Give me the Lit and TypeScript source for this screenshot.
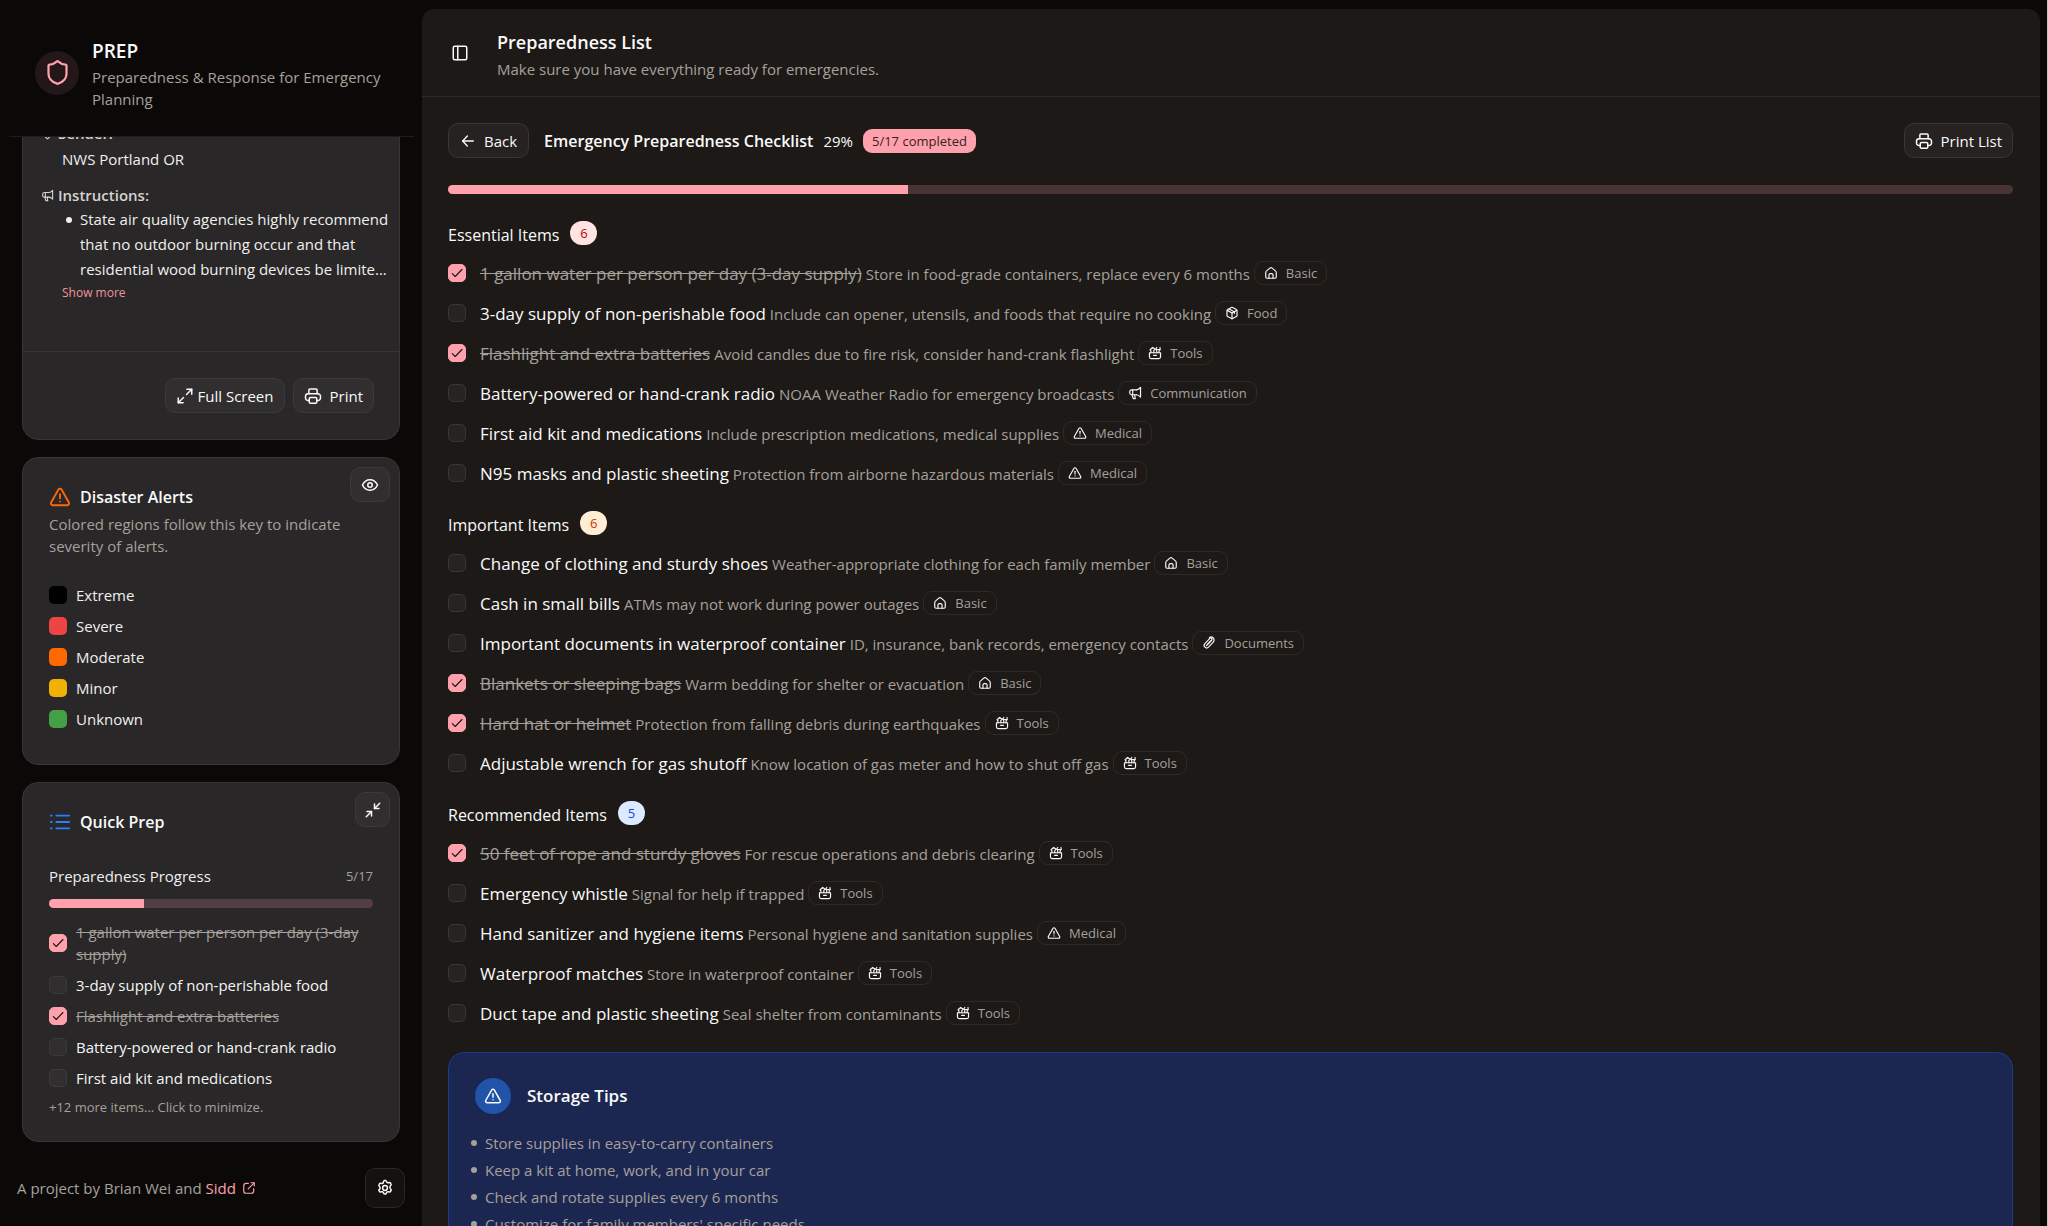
import { LitElement, html, css, svg, nothing } from "lit";
import { customElement, property } from "lit/decorators.js";
import { classMap } from "lit/directives/class-map.js";
import { styleMap } from "lit/directives/style-map.js";

const ICONS: Record<string, unknown> = {
  shield: svg`<path d="M20 13c0 5-3.5 7.5-7.66 8.95a1 1 0 0 1-.67-.01C7.5 20.5 4 18 4 13V6a1 1 0 0 1 1-1c2 0 4.5-1.2 6.24-2.72a1.17 1.17 0 0 1 1.52 0C14.51 3.81 17 5 19 5a1 1 0 0 1 1 1z"/>`,
  sidebar: svg`<rect x="3" y="3" width="18" height="18" rx="2"/><path d="M9 3v18"/>`,
  back: svg`<path d="M20 12H4"/><path d="M11 4.500 4 12l7 7.500"/>`,
  printer: svg`<path d="M7 18H5.500A3.500 3.500 0 0 1 2 14.500v-2A3.500 3.500 0 0 1 5.500 9h13a3.500 3.500 0 0 1 3.500 3.500v2a3.500 3.500 0 0 1-3.500 3.500H17"/><path d="M6.500 9V4a1.500 1.500 0 0 1 1.500-1.500h8A1.500 1.500 0 0 1 17.500 4v5"/><rect x="7" y="14" width="10" height="7.500" rx="1.500"/>`,
  expand: svg`<path d="M14.500 3H21v6.500"/><path d="M21 3l-7 7"/><path d="M9.500 21H3v-6.500"/><path d="M3 21l7-7"/>`,
  collapse: svg`<path d="M14 4v6h6"/><path d="M14 10l7-7"/><path d="M4 14h6v6"/><path d="M10 14l-7 7"/>`,
  eye: svg`<path d="M2 12c2-4.300 5.600-7 10-7s8 2.700 10 7c-2 4.300-5.600 7-10 7s-8-2.700-10-7z"/><circle cx="12" cy="12" r="3"/>`,
  alert: svg`<path d="M10.300 3.900 2.300 18a2 2 0 0 0 1.700 3h16a2 2 0 0 0 1.700-3l-8-14.100a2 2 0 0 0-3.400 0z"/><path d="M12 9v4.500"/><path d="M12 17h.01"/>`,
  list: svg`<path d="M8 5h14"/><path d="M8 12h14"/><path d="M8 19h14"/><path d="M2 5h1"/><path d="M2 12h1"/><path d="M2 19h1"/>`,
  external: svg`<path d="M11 4H7a4 4 0 0 0-4 4v9a4 4 0 0 0 4 4h9a4 4 0 0 0 4-4v-4"/><path d="M15.500 3H21v5.500"/><path d="M20.500 3.500 10.500 13.500"/>`,
  settings: svg`<path d="M9.700 4.100 10.400 2.600a1 1 0 0 1 .9-.6h1.400a1 1 0 0 1 .9.600l.7 1.500c.3.700 1.100 1.100 1.900 1l2-.3a1 1 0 0 1 1 .5l.9 1.500a1 1 0 0 1 0 1.100l-1.100 1.500c-.6.900-.6 2.300 0 3.200l1.100 1.500a1 1 0 0 1 0 1.100l-.9 1.500a1 1 0 0 1-1 .5l-2-.3c-.8-.1-1.600.3-1.900 1l-.7 1.500a1 1 0 0 1-.9.600h-1.400a1 1 0 0 1-.9-.6l-.7-1.500c-.3-.7-1.100-1.100-1.900-1l-2 .3a1 1 0 0 1-1-.5l-.9-1.500a1 1 0 0 1 0-1.100L5 13.600c.6-.9.6-2.300 0-3.200L3.900 8.900a1 1 0 0 1 0-1.100l.9-1.500a1 1 0 0 1 1-.5l2 .3c.8.1 1.600-.3 1.900-1z"/><circle cx="12" cy="12" r="3.200"/>`,
  check: svg`<path d="M4 13l5 5L20.500 6"/>`,
  pin: svg`<path d="M12 22c-4-3.200-8-7.500-8-12a8 8 0 0 1 16 0c0 4.500-4 8.800-8 12z"/><circle cx="12" cy="10" r="3"/>`,
  basic: svg`<path d="M3 11.500a4 4 0 0 1 1.500-3.100L10 3.700a3.200 3.200 0 0 1 4 0l5.500 4.700a4 4 0 0 1 1.500 3.100V19a2 2 0 0 1-2 2H5a2 2 0 0 1-2-2z"/><path d="M8.500 21v-5.500a2.500 2.500 0 0 1 2.500-2.500h2a2.500 2.500 0 0 1 2.500 2.500V21"/>`,
  food: svg`<path d="M12 22 4.500 18A2 2 0 0 1 3.400 16.200V7.800A2 2 0 0 1 4.500 6L11 2.400a2 2 0 0 1 2 0L19.500 6a2 2 0 0 1 1.100 1.800v8.400a2 2 0 0 1-1.100 1.800z"/><path d="M12 12v10"/><path d="M4 7.500l8 4.500 8-4.500"/><path d="M7.500 5.500l8.500 4.500v3"/>`,
  tools: svg`<path d="M2.500 11.500h19v7a3 3 0 0 1-3 3h-13a3 3 0 0 1-3-3z"/><path d="M9.500 16h5"/><path d="M5 11.500V8L3.500 6.500 8 2.500l4.500 3-2.500 2v4"/><path d="M15 11.500V7.500L13.500 5 15 2.500M20.500 2.500 21 6l-2 2v3.500M15 6h4"/>`,
  communication: svg`<path d="M14.500 6.500H6.500A3.500 3.500 0 0 0 3 10v1.500A3.500 3.500 0 0 0 6.500 15h8"/><path d="M14.500 6.500C17 6.500 20 4.500 21.500 2.500v16.500C20 17 17 15 14.500 15"/><path d="M8 6.500V15"/><path d="M7 15.500l2 6h3.500l-1-6"/>`,
  documents: svg`<path d="M9.500 14.500l7-7.500a2 2 0 0 0-3-3l-8.500 9a4.300 4.300 0 0 0 6.200 6.200l8.500-9"/><path d="M7.800 16.300l8.500-9"/><path d="M20 9.500a6 6 0 0 0-1-6.500c-1.800-1.700-4.700-1.500-6.500.3"/>`,
};

@customElement("prep-icon")
export class PrepIcon extends LitElement {
  @property() name = "";
  @property({ type: Number }) weight = 2;

  static styles = css`
    :host { display: inline-flex; flex: none; width: 18px; height: 18px; }
    .glyph { width: 100%; height: 100%; fill: none; stroke: currentColor; stroke-linecap: round; stroke-linejoin: round; }
  `;

  render() {
    return html`<svg class="glyph" viewBox="0 0 24 24" stroke-width=${this.weight} aria-hidden="true">${ICONS[this.name]}</svg>`;
  }
}

const controls = css`
  :host { display: block; }
  * { box-sizing: border-box; }
  button { font: inherit; color: inherit; cursor: pointer; }
  h1, h2, h3, p, ul { margin: 0; padding: 0; }
  .btn {
    display: inline-flex; align-items: center; justify-content: center; gap: 8px;
    height: 35px; padding: 0 10px; border: 1px solid #3c393a; border-radius: 10px;
    background: #302e2f; color: #fafaf9; font-size: 15px; line-height: 22px;
  }
  .check { display: inline-grid; flex: none; width: 18px; height: 18px; }
  .check > * { grid-area: 1 / 1; }
  .box {
    appearance: none; margin: 0; width: 18px; height: 18px;
    border: 1px solid #3d3a3a; border-radius: 5px; background: #302e2f;
  }
  .box:checked { background: #ffa1ad; border-color: #ffa1ad; }
  .tick { width: 14px; height: 14px; place-self: center; color: #1c1917; pointer-events: none; }
  .bar { height: 9px; border-radius: 9px; overflow: hidden; background: rgb(255 161 173 / 0.2); }
  .fill { height: 100%; background: #ffa1ad; }
  .dots { list-style: none; }
  .dots li { display: flex; gap: 8px; }
  .dots li::before { content: ""; flex: none; width: 6px; height: 6px; margin-top: 10px; border-radius: 50%; background: currentColor; }
`;

interface Item {
  title: string;
  note: string;
  tag: string;
  done?: boolean;
}

interface Group {
  name: string;
  tone: string;
  items: Item[];
}

const GROUPS: Group[] = [
  {
    name: "Essential Items",
    tone: "red",
    items: [
      { title: "1 gallon water per person per day (3-day supply)", note: "Store in food-grade containers, replace every 6 months", tag: "Basic", done: true },
      { title: "3-day supply of non-perishable food", note: "Include can opener, utensils, and foods that require no cooking", tag: "Food" },
      { title: "Flashlight and extra batteries", note: "Avoid candles due to fire risk, consider hand-crank flashlight", tag: "Tools", done: true },
      { title: "Battery-powered or hand-crank radio", note: "NOAA Weather Radio for emergency broadcasts", tag: "Communication" },
      { title: "First aid kit and medications", note: "Include prescription medications, medical supplies", tag: "Medical" },
      { title: "N95 masks and plastic sheeting", note: "Protection from airborne hazardous materials", tag: "Medical" },
    ],
  },
  {
    name: "Important Items",
    tone: "orange",
    items: [
      { title: "Change of clothing and sturdy shoes", note: "Weather-appropriate clothing for each family member", tag: "Basic" },
      { title: "Cash in small bills", note: "ATMs may not work during power outages", tag: "Basic" },
      { title: "Important documents in waterproof container", note: "ID, insurance, bank records, emergency contacts", tag: "Documents" },
      { title: "Blankets or sleeping bags", note: "Warm bedding for shelter or evacuation", tag: "Basic", done: true },
      { title: "Hard hat or helmet", note: "Protection from falling debris during earthquakes", tag: "Tools", done: true },
      { title: "Adjustable wrench for gas shutoff", note: "Know location of gas meter and how to shut off gas", tag: "Tools" },
    ],
  },
  {
    name: "Recommended Items",
    tone: "blue",
    items: [
      { title: "50 feet of rope and sturdy gloves", note: "For rescue operations and debris clearing", tag: "Tools", done: true },
      { title: "Emergency whistle", note: "Signal for help if trapped", tag: "Tools" },
      { title: "Hand sanitizer and hygiene items", note: "Personal hygiene and sanitation supplies", tag: "Medical" },
      { title: "Waterproof matches", note: "Store in waterproof container", tag: "Tools" },
      { title: "Duct tape and plastic sheeting", note: "Seal shelter from contaminants", tag: "Tools" },
    ],
  },
];

const TAG_ICONS: Record<string, string> = {
  Basic: "basic",
  Food: "food",
  Tools: "tools",
  Communication: "communication",
  Medical: "alert",
  Documents: "documents",
};

const SEVERITIES = [
  { name: "Extreme", color: "#000000" },
  { name: "Severe", color: "#ef4444" },
  { name: "Moderate", color: "#ff6900" },
  { name: "Minor", color: "#f0b100" },
  { name: "Unknown", color: "#43a047" },
];

const TIPS = [
  "Store supplies in easy-to-carry containers",
  "Keep a kit at home, work, and in your car",
  "Check and rotate supplies every 6 months",
  "Customize for family members' specific needs",
];

const ALL = GROUPS.flatMap((g) => g.items);
const DONE = ALL.filter((i) => i.done).length;
const SHARE = (DONE / ALL.length) * 100;

function checkbox(id: string, checked: boolean) {
  return html`<span class="check">
    <input class="box" type="checkbox" id=${id} .checked=${checked} />
    ${checked ? html`<prep-icon class="tick" name="check"></prep-icon>` : nothing}
  </span>`;
}

function progress(label: string) {
  return html`<div class="bar" role="progressbar" aria-label=${label} aria-valuenow=${Math.round(SHARE)} aria-valuemin="0" aria-valuemax="100">
    <div class="fill" style=${styleMap({ width: `${SHARE}%` })}></div>
  </div>`;
}

@customElement("prep-sidebar")
export class PrepSidebar extends LitElement {
  static styles = [
    controls,
    css`
      :host { display: flex; flex-direction: column; min-height: 0; font-size: 15px; line-height: 22px; }
      .brand {
        display: flex; align-items: center; gap: 13px; flex: none; height: 128px;
        margin: 9px 8px 0 9px; padding: 0 26px; border-bottom: 1px solid #1f1d1c;
      }
      .emblem { display: grid; place-items: center; flex: none; width: 44px; height: 44px; border-radius: 50%; background: #231719; color: #ffa1ad; }
      .emblem prep-icon { width: 27px; height: 27px; }
      .words { padding-top: 2px; }
      .name { font-size: 19px; line-height: 29px; font-weight: 600; color: #fafaf9; }
      .sub { color: #a6a09b; }
      .feed { flex: 1; min-height: 0; overflow: hidden; display: flex; flex-direction: column; justify-content: flex-end; gap: 17px; padding: 0 22px 8px; }
      .card { position: relative; flex: none; border: 1px solid #373536; border-radius: 16px; background: #292728; color: #f0efee; }
      .report { padding: 0 8px 48px 18px; }
      .field { display: flex; align-items: center; gap: 4px; font-weight: 600; color: #d6d3d1; }
      .field prep-icon { width: 13px; height: 13px; }
      .value { padding: 4px 0 14px 21px; }
      .steps { padding: 1px 0 0 25px; line-height: 25px; }
      .more { display: block; margin-left: 21px; padding: 1px 0 0; border: 0; background: none; color: #f2949f; font-size: 12px; line-height: 20px; }
      .actions { display: flex; justify-content: flex-end; gap: 8px; padding: 26px 25px; border-top: 1px solid #373536; }
      .tight { gap: 4px; }
      .panel { padding: 25px 26px; }
      .legend { padding-bottom: 34px; }
      .head { display: flex; align-items: center; gap: 9px; height: 28px; font-size: 16px; font-weight: 600; color: #fafaf9; }
      .head prep-icon { width: 22px; height: 22px; }
      .orange { color: #ff6900; }
      .blue { color: #2b7fff; }
      .corner { position: absolute; top: 9px; right: 9px; }
      .wide { width: 40px; }
      .small { width: 35px; padding: 0; }
      .desc { color: #a6a09b; padding-top: 2px; }
      .rows { list-style: none; display: flex; flex-direction: column; gap: 9px; }
      .keys { padding-top: 27px; }
      .row { display: flex; align-items: center; gap: 9px; }
      .swatch { width: 18px; height: 18px; flex: none; border-radius: 5px; }
      .tally { display: flex; align-items: center; justify-content: space-between; margin-top: 29px; }
      .count, .rest { font-size: 13px; color: #a6a09b; }
      .bar { margin: 12px 0 13px; }
      .todo { font-weight: 500; color: #f5f5f4; }
      .done { color: #a6a09b; text-decoration: line-through; }
      .rest { padding-top: 9px; line-height: 18px; }
      .foot { flex: none; display: flex; align-items: center; justify-content: space-between; height: 76px; padding: 0 17px; color: #a6a09b; }
      .author { display: inline-flex; align-items: center; gap: 6px; color: #ffa1ad; text-decoration: none; }
      .author prep-icon { width: 14px; height: 14px; }
      .gear { width: 40px; height: 40px; padding: 0; background: #141211; border-color: #292625; }
    `,
  ];

  render() {
    return html`
      <header class="brand">
        <span class="emblem"><prep-icon name="shield"></prep-icon></span>
        <div class="words">
          <h1 class="name">PREP</h1>
          <p class="sub">Preparedness &amp; Response for Emergency Planning</p>
        </div>
      </header>
      <div class="feed">
        <section class="card">
          <div class="report">
            <div class="field"><prep-icon name="pin"></prep-icon>Sender:</div>
            <div class="value">NWS Portland OR</div>
            <div class="field"><prep-icon name="communication"></prep-icon>Instructions:</div>
            <ul class="steps dots">
              <li>State air quality agencies highly recommend that no outdoor burning occur and that residential wood burning devices be limite...</li>
            </ul>
            <button class="more">Show more</button>
          </div>
          <div class="actions">
            <button class="btn tight"><prep-icon name="expand"></prep-icon>Full Screen</button>
            <button class="btn"><prep-icon name="printer"></prep-icon>Print</button>
          </div>
        </section>

        <section class="card panel legend">
          <button class="btn corner wide" aria-label="Toggle alerts"><prep-icon name="eye"></prep-icon></button>
          <h2 class="head"><prep-icon class="orange" name="alert"></prep-icon>Disaster Alerts</h2>
          <p class="desc">Colored regions follow this key to indicate severity of alerts.</p>
          <ul class="rows keys">
            ${SEVERITIES.map((s) => html`<li class="row"><span class="swatch" style=${styleMap({ background: s.color })}></span>${s.name}</li>`)}
          </ul>
        </section>

        <section class="card panel">
          <button class="btn corner small" aria-label="Minimize"><prep-icon name="collapse"></prep-icon></button>
          <h2 class="head"><prep-icon class="blue" name="list"></prep-icon>Quick Prep</h2>
          <div class="tally"><span>Preparedness Progress</span><span class="count">${DONE}/${ALL.length}</span></div>
          ${progress("Preparedness progress")}
          <ul class="rows">
            ${ALL.slice(0, 5).map(
              (item, i) => html`<li class="row">
                ${checkbox(`quick-${i}`, !!item.done)}
                <label for=${`quick-${i}`} class=${classMap({ todo: !item.done, done: !!item.done })}>${item.title}</label>
              </li>`,
            )}
          </ul>
          <p class="rest">+${ALL.length - 5} more items... Click to minimize.</p>
        </section>
      </div>
      <footer class="foot">
        <span>A project by Brian Wei and <a class="author" href="#">Sidd <prep-icon name="external"></prep-icon></a></span>
        <button class="btn gear" aria-label="Settings"><prep-icon name="settings"></prep-icon></button>
      </footer>
    `;
  }
}

@customElement("prep-checklist")
export class PrepChecklist extends LitElement {
  static styles = [
    controls,
    css`
      :host { display: flex; flex-direction: column; min-height: 0; min-width: 0; overflow: hidden; border-radius: 12px 12px 0 0; background: #1c1917; color: #fafaf9; font-size: 15px; line-height: 22px; }
      .top { flex: none; display: flex; align-items: center; gap: 17px; height: 88px; padding: 0 18px; border-bottom: 1px solid #2d2a28; }
      .toggle { display: grid; place-items: center; width: 40px; height: 40px; padding: 0; border: 0; background: none; }
      .words { padding-top: 2px; }
      .title { margin-bottom: 2px; font-size: 18px; line-height: 28px; font-weight: 600; }
      .muted { color: #a6a09b; }
      .body { flex: 1; min-height: 0; overflow: hidden; padding: 26px 27px 0 26px; }
      .lead { display: flex; align-items: center; gap: 10px; }
      .btn { background: #252221; border-color: #383534; }
      .back { padding: 0 11px; }
      .lead-title { margin-left: 5px; font-size: 16px; font-weight: 600; }
      .back prep-icon { width: 16px; height: 16px; }
      .pill { height: 24px; padding: 0 9px; border-radius: 9px; background: #ffa1ad; color: #3a1d22; font-size: 13px; line-height: 24px; }
      .print { margin-left: auto; }
      .bar { margin: 27px 0; }
      .group { height: 290px; }
      .group-head { display: flex; align-items: center; gap: 11px; height: 28px; margin-bottom: 11px; font-size: 16px; font-weight: 400; }
      .num { align-self: flex-start; height: 24px; width: 27px; border-radius: 12px; font-size: 13px; line-height: 24px; text-align: center; }
      .red { background: #ffe2e2; color: #c10007; }
      .orange { background: #ffedd4; color: #ca3500; }
      .blue { background: #dbeafe; color: #1447e6; }
      .items { list-style: none; display: flex; flex-direction: column; gap: 14px; }
      .item { display: flex; align-items: center; gap: 14px; height: 26px; }
      .box { background: #262322; border-color: #383534; }
      .box:checked { background: #ffa1ad; border-color: #ffa1ad; }
      .line { display: flex; align-items: baseline; gap: 4px; white-space: nowrap; }
      .label { font-size: 17px; font-weight: 500; }
      .done { font-weight: 400; color: #a6a09b; text-decoration: line-through; }
      .tag { display: inline-flex; align-items: center; gap: 8px; height: 24px; padding: 0 9px; border: 1px solid #2d2a28; border-radius: 9px; font-size: 13px; color: #a6a09b; }
      .tag prep-icon { width: 14px; height: 14px; color: #fafaf9; }
      .last { height: auto; margin-bottom: 26px; }
      .tips { padding: 25px 26px 26px; border: 1px solid #1c398e; border-radius: 16px; background: #1c2751; }
      .tips-head { display: flex; align-items: center; gap: 16px; font-size: 17px; font-weight: 600; }
      .badge { display: grid; place-items: center; width: 36px; height: 36px; border-radius: 50%; background: #2153a8; }
      .tip-list { padding-top: 16px; margin-left: -4px; color: #a6a09b; line-height: 27px; }
    `,
  ];

  render() {
    return html`
      <header class="top">
        <button class="toggle" aria-label="Toggle sidebar"><prep-icon name="sidebar"></prep-icon></button>
        <div class="words">
          <h1 class="title">Preparedness List</h1>
          <p class="muted">Make sure you have everything ready for emergencies.</p>
        </div>
      </header>
      <div class="body">
        <div class="lead">
          <button class="btn back"><prep-icon name="back"></prep-icon>Back</button>
          <h2 class="lead-title">Emergency Preparedness Checklist</h2>
          <span>${Math.round(SHARE)}%</span>
          <span class="pill">${DONE}/${ALL.length} completed</span>
          <button class="btn print"><prep-icon name="printer"></prep-icon>Print List</button>
        </div>
        ${progress("Checklist completed")}
        ${GROUPS.map(
          (g, gi) => html`<section class=${classMap({ group: true, last: gi === GROUPS.length - 1 })}>
            <h3 class="group-head">${g.name}<span class="num ${g.tone}">${g.items.length}</span></h3>
            <ul class="items">
              ${g.items.map(
                (item, i) => html`<li class="item">
                  ${checkbox(`item-${gi}-${i}`, !!item.done)}
                  <div class="line">
                    <label for=${`item-${gi}-${i}`} class=${classMap({ label: true, done: !!item.done })}>${item.title}</label>
                    <span class="muted">${item.note}</span>
                    <span class="tag"><prep-icon name=${TAG_ICONS[item.tag]}></prep-icon>${item.tag}</span>
                  </div>
                </li>`,
              )}
            </ul>
          </section>`,
        )}
        <section class="tips">
          <h3 class="tips-head"><span class="badge"><prep-icon name="alert"></prep-icon></span>Storage Tips</h3>
          <ul class="tip-list dots">
            ${TIPS.map((t) => html`<li>${t}</li>`)}
          </ul>
        </section>
      </div>
    `;
  }
}

@customElement("app-root")
export class AppRoot extends LitElement {
  static styles = css`
    :host { display: block; font-family: "Open Sans", "Noto Sans", sans-serif; }
    .shell {
      box-sizing: border-box; display: grid; grid-template-columns: 422px minmax(0, 1fr);
      height: 100vh; overflow: hidden; padding-right: 7px; border-right: 1px solid #c4c4c4; background: #0b0908;
    }
    .main { margin-top: 9px; }
  `;

  render() {
    return html`<div class="shell">
      <prep-sidebar></prep-sidebar>
      <prep-checklist class="main"></prep-checklist>
    </div>`;
  }
}
